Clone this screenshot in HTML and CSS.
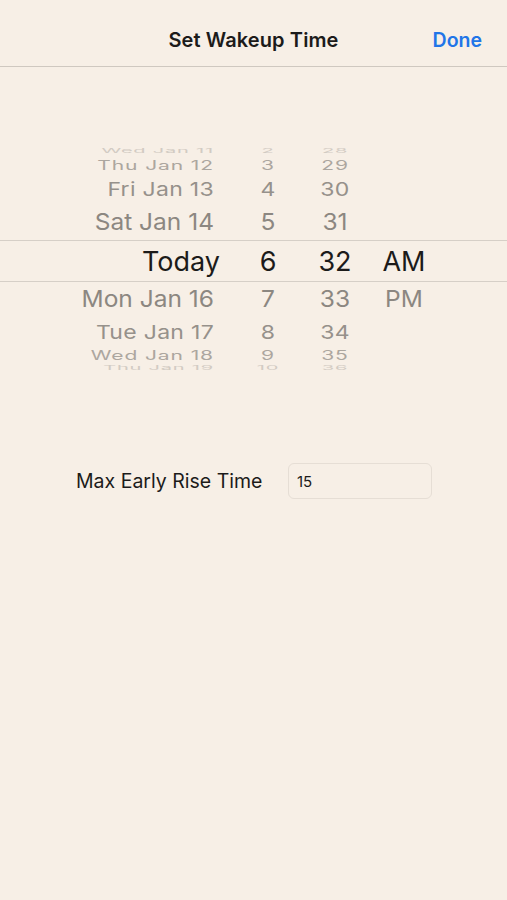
FILE: index.html
```html
<!DOCTYPE html>
<html lang="en">
<head>
    <meta charset="UTF-8">
    <meta name="viewport" content="width=device-width, initial-scale=1.0">
    <title>Set Wakeup Time</title>
    <link rel="stylesheet" href="styles.css">
</head>
<body>
    <div class="navbar">
        <div></div>
        <div class="nav-title">Set Wakeup Time</div>
        <div class="nav-done">Done</div>
    </div>

    <div class="picker">
        <div class="row far far-top">
            <div class="cell date"><span>Wed Jan 11</span></div>
            <div class="cell"><span>2</span></div>
            <div class="cell"><span>28</span></div>
            <div class="cell"></div>
        </div>
        <div class="row edge">
            <div class="cell date"><span>Thu Jan 12</span></div>
            <div class="cell"><span>3</span></div>
            <div class="cell"><span>29</span></div>
            <div class="cell"></div>
        </div>
        <div class="row mid mid-top">
            <div class="cell date"><span>Fri Jan 13</span></div>
            <div class="cell"><span>4</span></div>
            <div class="cell"><span>30</span></div>
            <div class="cell"></div>
        </div>
        <div class="row near near-top">
            <div class="cell date"><span>Sat Jan 14</span></div>
            <div class="cell"><span>5</span></div>
            <div class="cell"><span>31</span></div>
            <div class="cell"></div>
        </div>
        <div class="row selected">
            <div class="cell date"><span>Today</span></div>
            <div class="cell"><span>6</span></div>
            <div class="cell"><span>32</span></div>
            <div class="cell"><span>AM</span></div>
        </div>
        <div class="row near near-bottom">
            <div class="cell date"><span>Mon Jan 16</span></div>
            <div class="cell"><span>7</span></div>
            <div class="cell"><span>33</span></div>
            <div class="cell"><span>PM</span></div>
        </div>
        <div class="row mid mid-bottom">
            <div class="cell date"><span>Tue Jan 17</span></div>
            <div class="cell"><span>8</span></div>
            <div class="cell"><span>34</span></div>
            <div class="cell"></div>
        </div>
        <div class="row edge edge-bottom">
            <div class="cell date"><span>Wed Jan 18</span></div>
            <div class="cell"><span>9</span></div>
            <div class="cell"><span>35</span></div>
            <div class="cell"></div>
        </div>
        <div class="row far far-bottom">
            <div class="cell date"><span>Thu Jan 19</span></div>
            <div class="cell"><span>10</span></div>
            <div class="cell"><span>36</span></div>
            <div class="cell"></div>
        </div>
    </div>

    <div class="form-row">
        <label class="form-label">Max Early Rise Time</label>
        <div class="form-input">15</div>
    </div>
</body>
</html>
```

FILE: styles.css
```css
body {
    margin: 0;
    padding: 0;
    height: 900px;
    background: #f7efe6;
    font-family: Inter, "Liberation Sans", sans-serif;
    color: #1c1b1a;
    overflow: hidden;
}

.navbar {
    height: 67px;
    box-sizing: border-box;
    padding-top: 14px;
    display: grid;
    grid-template-columns: 1fr auto 1fr;
    align-items: center;
    border-bottom: 1.5px solid #cfc8c0;
}

.nav-title {
    font-size: 20px;
    font-weight: 600;
    letter-spacing: 0.1px;
}

.nav-done {
    justify-self: end;
    padding-right: 25px;
    font-size: 19.5px;
    font-weight: 600;
    color: #2175e8;
}

/* date wheel */
.picker {
    margin-top: 80px;
    display: flex;
    flex-direction: column;
}

.row {
    display: grid;
    grid-template-columns: 214px 108px 26px 112px;
    grid-template-rows: minmax(0, 1fr);
    align-items: center;
    box-sizing: border-box;
    overflow: hidden;
    color: #8c8781;
}

.cell {
    display: flex;
    justify-content: center;
    white-space: nowrap;
}

.cell.date {
    justify-content: flex-end;
}

.cell span {
    display: inline-block;
}

.far {
    height: 9px;
    font-size: 20px;
    letter-spacing: 0.8px;
    color: #d2cbc3;
}

.far-top span {
    transform: translateY(-1px) scaleY(0.34);
}

.far-bottom {
    height: 10px;
}

.far-bottom span {
    transform: translateY(1px) scaleY(0.34);
}

.edge {
    height: 18px;
    font-size: 21px;
    letter-spacing: 0.9px;
    color: #aca69f;
}

.edge span {
    transform: scaleY(0.6);
}

.edge-bottom {
    height: 14px;
}

.mid {
    height: 30px;
    font-size: 23px;
    letter-spacing: 0.3px;
    color: #96918b;
}

.mid span {
    transform: scaleY(0.82);
}

.mid-bottom {
    height: 32px;
}

.near {
    height: 36px;
    font-size: 24.5px;
    color: #8c8781;
}

.near span {
    transform: scaleY(0.94);
}

.near-bottom {
    height: 34px;
}

.selected {
    height: 42px;
    font-size: 27px;
    color: #1c1b1a;
    border-top: 1.5px solid #d6cfc7;
    border-bottom: 1.5px solid #d6cfc7;
}

.selected .date span {
    margin-right: -6px;
}

/* form */
.form-row {
    margin-top: 91px;
    padding-left: 76px;
    display: flex;
    align-items: center;
}

.form-label {
    width: 212px;
    font-size: 19.5px;
    color: #1c1b1a;
}

.form-input {
    width: 144px;
    height: 36px;
    box-sizing: border-box;
    padding-left: 8px;
    display: flex;
    align-items: center;
    border: 1px solid #e6ded5;
    border-radius: 6px;
    font-size: 15px;
}
```
